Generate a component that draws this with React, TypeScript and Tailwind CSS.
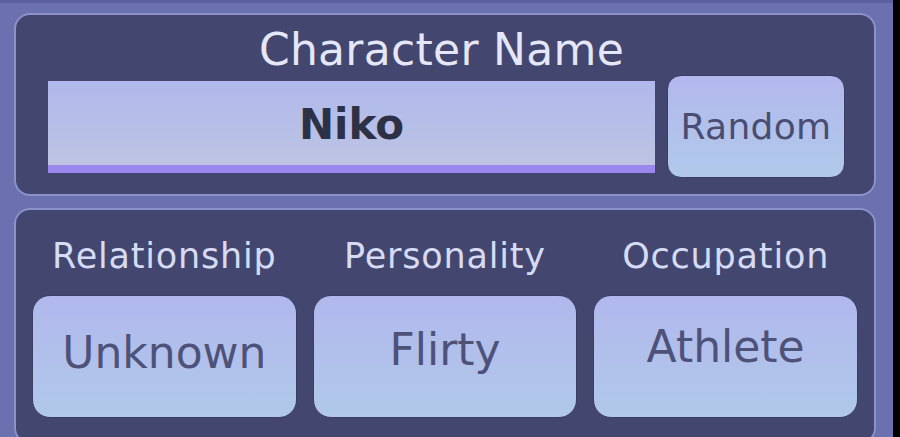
const traits = [
  { label: "Relationship", value: "Unknown", shift: "pb-2" },
  { label: "Personality", value: "Flirty", shift: "pb-[14px]" },
  { label: "Occupation", value: "Athlete", shift: "pb-5" },
];

const font = { fontFamily: '"DejaVu Sans", "Noto Sans", sans-serif' };

export default function App() {
  return (
    <div className="flex h-[437px] w-[900px] overflow-hidden bg-black" style={font}>
      <div className="flex w-[893px] flex-col gap-3 border-t-[3px] border-[#5c60a3] bg-[#6b71ae] pl-[14px] pr-[17px] pt-[10px]">
        <section className="rounded-[16px] border-2 border-[#8b91c9] bg-[#434770] pb-4 pl-[32px] pr-[29px] pt-[11px]">
          <h1 className="pr-[10px] text-center text-[44px] leading-[48px] tracking-[0.3px] text-[#e5e7f8]">
            Character Name
          </h1>
          <div className="mt-px flex items-center gap-3">
            <div className="flex h-[92px] flex-1 items-center justify-center border-b-8 border-[#9b88ef] bg-gradient-to-b from-[#b0b8ed] to-[#bdc4e2] pt-1">
              <span className="text-[42px] font-bold leading-none text-[#2d3146]">Niko</span>
            </div>
            <button className="flex h-[103px] w-[178px] items-center justify-center rounded-[14px] border-[1.5px] border-[#3b3f63] bg-gradient-to-b from-[#b3b8ed] to-[#b0c9ea] text-[36px] leading-none tracking-[0.3px] text-[#4a4d71]">
              Random
            </button>
          </div>
        </section>

        <section className="rounded-[16px] border-2 border-[#8b91c9] bg-[#434770] px-4 pb-6 pt-[26px]">
          <div className="grid grid-cols-3 gap-4">
            {traits.map((t) => (
              <div key={t.label} className="flex flex-col items-center">
                <p className="text-[35px] leading-[40px] tracking-[0.8px] text-[#d6dbf4]">{t.label}</p>
                <button
                  className={`mt-[19px] flex h-[123px] w-full items-center justify-center rounded-[18px] border-[1.5px] border-[#3b3f63] bg-gradient-to-b from-[#b1b8ed] to-[#b0c8e9] text-[44px] leading-none text-[#4f5278] ${t.shift}`}
                >
                  {t.value}
                </button>
              </div>
            ))}
          </div>
        </section>
      </div>
    </div>
  );
}
